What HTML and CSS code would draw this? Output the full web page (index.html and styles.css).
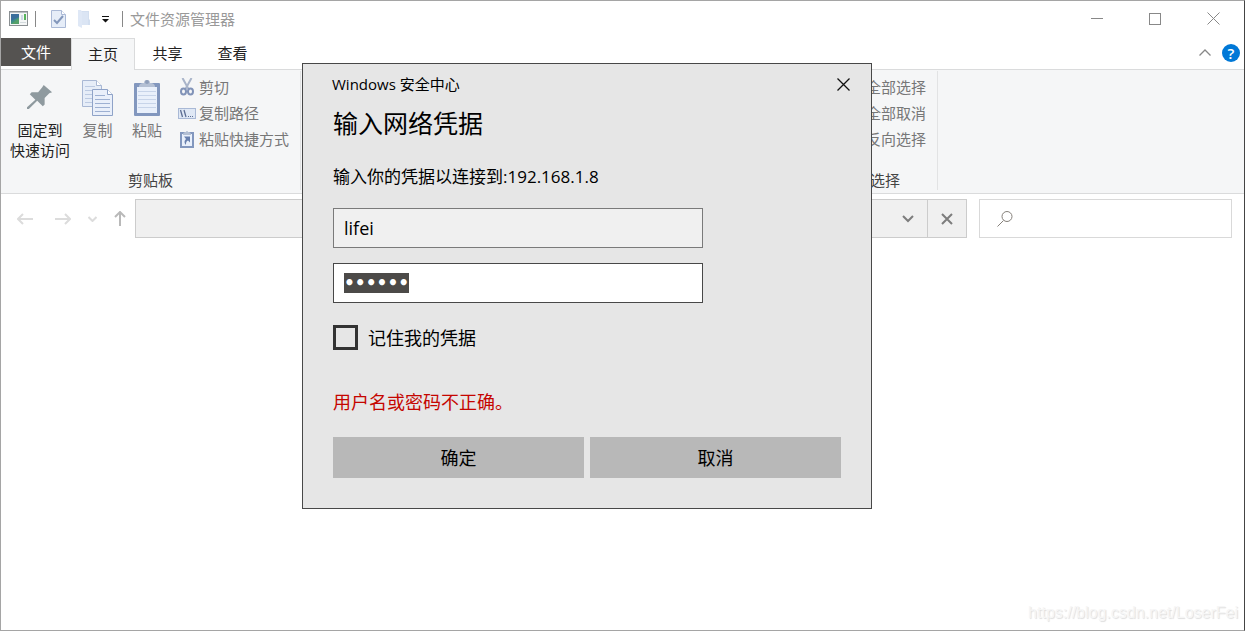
FILE: index.html
```html
<!DOCTYPE html>
<html lang="zh-CN">
<head>
  <meta charset="UTF-8">
  <meta name="viewport" content="width=device-width, initial-scale=1.0">
  <title>文件资源管理器</title>
  <link rel="stylesheet" href="styles.css">
</head>
<body>
  <div class="window">
    <!-- Title bar -->
    <header class="titlebar">
      <svg class="app-icon" width="20" height="16" viewBox="0 0 20 16">
        <rect x="0.5" y="0.5" width="18" height="14" fill="#f4f6f6" stroke="#8a8f92"/>
        <path d="M1 1.5h17" stroke="#b9c0c4"/>
        <rect x="2" y="3" width="8" height="10" fill="#3f8f86"/>
        <path d="M2 3h8v3L2 10z" fill="#3a6f9c"/>
        <path d="M2 13l8-6v6z" fill="#55a06a"/>
        <rect x="12" y="4" width="2" height="5" fill="#cdd9e6"/>
        <rect x="15" y="3" width="2" height="6" fill="#57b45c"/>
        <path d="M11 11.5h6" stroke="#d3dadd"/>
      </svg>
      <span class="divider"></span>
      <button class="quick" aria-label="属性">
        <svg width="15" height="18" viewBox="0 0 15 18">
          <path d="M.5.5h10l4 4v13H.5z" fill="#e6edf8" stroke="#aab9d6"/>
          <path d="M10.500.5v4h4" fill="#fff" stroke="#aab9d6"/>
          <path d="M3 10l3 3 6-7" fill="none" stroke="#8397bb" stroke-width="2"/>
        </svg>
      </button>
      <button class="quick" aria-label="新建文件夹">
        <svg width="12" height="18" viewBox="0 0 12 18">
          <path d="M3 1h8v8l1 1v5H3z" fill="#d3dff0"/>
          <path d="M0 0h3l1 2v16l-4-2z" fill="#dfe8f6"/>
          <path d="M4 2h6v13H4z" fill="#dbe5f4"/>
        </svg>
      </button>
      <button class="quick more" aria-label="自定义">
        <svg width="8" height="8" viewBox="0 0 8 8"><path d="M0 1h7v1H0zM0 4h7L3.500 7.500z" fill="#111"/></svg>
      </button>
      <span class="divider"></span>
      <h1 class="title">文件资源管理器</h1>
      <div class="window-buttons">
        <button aria-label="最小化"><svg width="12" height="12"><path d="M0 5.500h12" stroke="#888"/></svg></button>
        <button aria-label="最大化"><svg width="12" height="12"><rect x=".5" y=".5" width="11" height="11" fill="none" stroke="#888"/></svg></button>
        <button aria-label="关闭"><svg width="13" height="13"><path d="M.5.5l12 12M12.500.5l-12 12" stroke="#888"/></svg></button>
      </div>
    </header>

    <!-- Tabs -->
    <nav class="tabs">
      <button class="tab file">文件</button>
      <button class="tab active">主页</button>
      <button class="tab">共享</button>
      <button class="tab">查看</button>
      <div class="tab-tools">
        <button aria-label="折叠功能区"><svg width="12" height="7"><path d="M.5 6.500L6 1l5.500 5.500" fill="none" stroke="#888" stroke-width="1.300"/></svg></button>
        <button class="help" aria-label="帮助">?</button>
      </div>
    </nav>

    <!-- Ribbon -->
    <section class="ribbon">
      <div class="group clipboard">
        <div class="group-body">
          <button class="big pin">
            <svg width="26" height="26" viewBox="0 0 28 28">
              <path d="M18 1l9 8-3 1-5 5v7l-2 2-6-6-9 9-2 0 0-2 9-8-6-6 2-2h7l4-5z" fill="#8f9a9f"/>
            </svg>
            <span>固定到<br>快速访问</span>
          </button>
          <button class="big copy" disabled>
            <svg width="31" height="36" viewBox="0 0 31 36">
              <path d="M.5.5h14l5 5v21H.5z" fill="#e6edf8" stroke="#a9b8d4"/>
              <path d="M14.500.5v5h5" fill="#fff" stroke="#a9b8d4"/>
              <path d="M3 6.500h10M3 10.500h14M3 14.500h14M3 18.500h14M3 22.500h14" stroke="#bccae2"/>
              <path d="M10.500 9.500h15l5 5v21h-20z" fill="#e9effa" stroke="#8fa3c8"/>
              <path d="M25.500 9.500v5h5" fill="#fff" stroke="#8fa3c8"/>
              <path d="M13 15.500h10M13 19.500h15M13 23.500h15M13 27.500h15M13 31.500h15" stroke="#9db0d2"/>
            </svg>
            <span>复制</span>
          </button>
          <button class="big paste" disabled>
            <svg width="26" height="37" viewBox="0 0 26 37">
              <rect x="0" y="4" width="26" height="33" rx="1" fill="#8297be"/>
              <path d="M3 8h20v26H3z" fill="#e9f0fb"/>
              <path d="M4 12.500h18M4 16.500h18M4 20.500h18M4 24.500h18M4 28.500h18" stroke="#c7d4e9"/>
              <path d="M5 8c0-3 2-4 5-4a3 3 0 0 1 6 0c3 0 5 1 5 4z" fill="#b4c0d4"/>
              <circle cx="13" cy="3" r="2" fill="#8f9fbb"/>
            </svg>
            <span>粘贴</span>
          </button>
          <div class="small-list">
            <button disabled>
              <svg width="18" height="18" viewBox="0 0 18 18" fill="none">
                <path d="M4.500 0l6 11M13.500 0L7.500 11" stroke="#a9b4c9" stroke-width="2"/>
                <ellipse cx="5.500" cy="13.500" rx="2.500" ry="3" stroke="#8193b8" stroke-width="2"/>
                <ellipse cx="12.500" cy="13.500" rx="2.500" ry="3" stroke="#8193b8" stroke-width="2"/>
              </svg>
              剪切
            </button>
            <button disabled>
              <svg width="18" height="11" viewBox="0 0 18 11">
                <rect x=".5" y=".5" width="17" height="10" fill="#dfe8f5" stroke="#a9b9d6"/>
                <path d="M2.500 2l2 7M6 2l2 7" stroke="#5d6f94" stroke-width="1.300"/>
                <path d="M10 8.500h1M12 8.500h1M14 8.500h1" stroke="#5d6f94"/>
              </svg>
              复制路径
            </button>
            <button disabled>
              <svg width="18" height="18" viewBox="0 0 18 18">
                <path d="M2 2h14v16H2z" fill="#8297be"/>
                <path d="M4 4h10v12H4z" fill="#e9f0fb"/>
                <path d="M5 5c0-3 2-3 3-3a1 1 0 0 1 2 0c1 0 3 0 3 3z" fill="#b4c0d4"/>
                <path d="M6 6.500h6v6l-2-2c-2 1-2 2-2 4.500-2-2-2-4 0-6z" fill="#6880ae"/>
              </svg>
              粘贴快捷方式
            </button>
          </div>
        </div>
        <div class="group-label">剪贴板</div>
      </div>
      <div class="group organize"></div>
      <div class="group select">
        <div class="group-body">
          <div class="small-list">
            <button>全部选择</button>
            <button>全部取消</button>
            <button>反向选择</button>
          </div>
        </div>
        <div class="group-label">选择</div>
      </div>
    </section>

    <!-- Address row -->
    <div class="address-row">
      <div class="nav-buttons">
        <button aria-label="后退"><svg width="16" height="12"><path d="M6 1L1 6l5 5M1 6h15" fill="none" stroke="#dcdcdc" stroke-width="2"/></svg></button>
        <button aria-label="前进"><svg width="16" height="12"><path d="M10 1l5 5-5 5M15 6H0" fill="none" stroke="#dcdcdc" stroke-width="2"/></svg></button>
        <button aria-label="最近"><svg width="9" height="6"><path d="M.5 1l4 4 4-4" fill="none" stroke="#dcdcdc" stroke-width="2"/></svg></button>
        <button aria-label="向上"><svg width="12" height="15"><path d="M1 6l5-5 5 5M6 1v14" fill="none" stroke="#b9b9b9" stroke-width="2"/></svg></button>
      </div>
      <div class="address">
        <button aria-label="展开"><svg width="12" height="8"><path d="M1 1l5 5 5-5" fill="none" stroke="#7d7d7d" stroke-width="2"/></svg></button>
        <button class="stop" aria-label="停止"><svg width="12" height="12"><path d="M1 1l10 10M11 1L1 11" stroke="#7d7d7d" stroke-width="2"/></svg></button>
      </div>
      <label class="search">
        <svg width="16" height="16" viewBox="0 0 16 16"><circle cx="10" cy="5.500" r="5" fill="none" stroke="#85807a"/><path d="M6.500 9.500L.5 15.500" stroke="#85807a"/></svg>
        <input type="text" aria-label="搜索">
      </label>
    </div>

    <main class="content">
      <span class="watermark">https://blog.csdn.net/LoserFei</span>
    </main>
  </div>

  <!-- Credential dialog -->
  <form class="dialog" role="dialog" aria-labelledby="dialog-heading">
    <div class="dialog-top">
      <span>Windows 安全中心</span>
      <button type="button" class="dialog-close" aria-label="关闭"><svg width="13" height="13"><path d="M.5.5l12 12M12.500.5l-12 12" stroke="#111" stroke-width="1.300"/></svg></button>
    </div>
    <div class="dialog-body">
      <h2 id="dialog-heading">输入网络凭据</h2>
      <p class="message">输入你的凭据以连接到:192.168.1.8</p>
      <div class="fields">
        <input class="field user" type="text" value="lifei" aria-label="用户名">
        <input class="field password" type="password" id="password" value="123456" aria-label="密码">
      </div>
      <label class="remember"><input type="checkbox">记住我的凭据</label>
      <p class="error">用户名或密码不正确。</p>
      <div class="actions">
        <button type="submit">确定</button>
        <button type="button">取消</button>
      </div>
    </div>
  </form>

  <script>
    const password = document.getElementById('password');
    password.focus();
    password.select();
  </script>
</body>
</html>
```
FILE: styles.css
```css
/* Reset & base */
* { margin: 0; padding: 0; box-sizing: border-box; }
body { font-family: "Open Sans", "Noto Sans CJK SC", sans-serif; font-size: 15px; line-height: 20px; color: #222; background: #fff; }
button, input { font: inherit; color: inherit; background: none; border: 0; outline: 0; }
svg { display: block; flex: none; }

.window { display: flex; flex-direction: column; min-height: 100vh; border: 1px solid #a5a5a5; border-right-color: #444; }

/* Title bar */
.titlebar { display: flex; align-items: center; height: 37px; padding: 0 2px 2px 8px; }
.divider { width: 1px; height: 16px; background: #888; }
.app-icon { margin-right: 6px; }
.quick { margin-left: 12px; }
.quick.more { margin-right: 12px; }
.divider + .quick { margin-left: 15px; }
.title { margin-left: 7px; font-size: 15px; font-weight: 400; color: #999; }
.window-buttons { display: flex; margin-left: auto; height: 100%; }
.window-buttons button { display: flex; align-items: center; justify-content: center; width: 58px; }

/* Tabs */
.tabs { display: flex; height: 32px; border-bottom: 1px solid #dadbdc; }
.tab { width: 65px; height: 31px; padding-bottom: 2px; }
.tab.file { width: 70px; height: 28px; padding-bottom: 0; background: #555351; color: #fff; }
.tab.active { width: 64px; height: 32px; background: #f5f6f7; border: 1px solid #dadbdc; border-bottom: 0; }
.tab-tools { display: flex; align-items: center; gap: 11px; margin-left: auto; padding: 0 4px 2px 0; }
.help { width: 18px; height: 18px; border-radius: 50%; background: #0078d7; color: #fff; font-weight: 600; line-height: 18px; }

/* Ribbon */
.ribbon { display: flex; height: 124px; padding: 1px 0 3px; background: #f5f6f7; border-bottom: 1px solid #dadbdc; }
.group { display: flex; flex-direction: column; flex: none; border-right: 1px solid #e2e3e4; }
.group-body { display: flex; flex: 1; align-items: flex-start; }
.group-label { line-height: 20px; text-align: center; color: #444; }
.clipboard { width: 300px; }
.organize { width: 532px; }
.select { width: 105px; }

.big { display: flex; flex-direction: column; align-items: center; justify-content: flex-end; gap: 4px; height: 69px; }
.big:disabled, .small-list button { color: #777; }
.pin { width: 78px; height: 89px; gap: 10px; }
.copy { width: 37px; }
.paste { width: 62px; }
.small-list { display: flex; flex-direction: column; padding-top: 3px; }
.small-list button { display: flex; align-items: center; gap: 3px; height: 26px; white-space: nowrap; }
.select .small-list { margin-left: auto; padding-right: 11px; }

/* Address row */
.address-row { display: flex; gap: 12px; height: 45px; padding: 5px 12px 0 16px; }
.address-row > * { height: 39px; }
.nav-buttons { display: flex; align-items: center; gap: 17px; width: 106px; }
.nav-buttons button:first-child { margin-right: 5px; }
.address { display: flex; flex: 1; justify-content: flex-end; background: #f0f0f0; border: 1px solid #ccc; }
.address button { display: flex; align-items: center; justify-content: center; width: 38px; }
.address .stop { width: 39px; border-left: 1px solid #ccc; }
.search { display: flex; align-items: center; width: 253px; padding-left: 17px; border: 1px solid #d9d9d9; }
.search input { flex: 1; min-width: 0; height: 100%; padding: 0 8px; }

.content { display: flex; flex: 1; align-items: flex-end; justify-content: flex-end; padding: 0 6px 7px; }
.watermark { font: 16px/20px "Liberation Sans", sans-serif; color: #f6f6f6; text-shadow: 1px 1px 1px #ddd; }

/* Credential dialog */
.dialog { position: absolute; top: 63px; left: 302px; width: 570px; color: #000; background: #e6e6e6; border: 1px solid #484848; font-size: 18px; }
.dialog-top { display: flex; align-items: center; justify-content: space-between; height: 40px; padding-left: 29px; font-size: 15px; }
.dialog-close { display: flex; align-items: center; justify-content: center; width: 56px; height: 40px; }
.dialog-body { padding: 0 30px 30px; }
.dialog h2 { font-size: 25px; font-weight: 400; line-height: 38px; }
.message { margin: 18px 0 14px; font-size: 17px; line-height: 34px; }
.fields { display: flex; flex-direction: column; gap: 15px; width: 370px; }
.field { height: 40px; padding: 0 10px; border: 1px solid #484848; background: #fff; }
.user { background: #f0f0f0; border-color: #7a7a7a; }
.password { font-family: "DejaVu Sans", sans-serif; font-size: 17px; font-weight: 700; line-height: 24px; }
.password::selection { background: #4c4a48; color: #fff; }
.remember { display: flex; align-items: center; gap: 10px; height: 25px; margin-top: 22px; }
.remember input { appearance: none; width: 25px; height: 25px; border: 3px solid #333; }
.remember input:checked { background: #333; }
.error { margin: 40px 0 23px; line-height: 24px; color: #c50500; }
.actions { display: grid; grid-template-columns: 1fr 1fr; gap: 6px; }
.actions button { height: 41px; background: #b8b8b8; }
```
